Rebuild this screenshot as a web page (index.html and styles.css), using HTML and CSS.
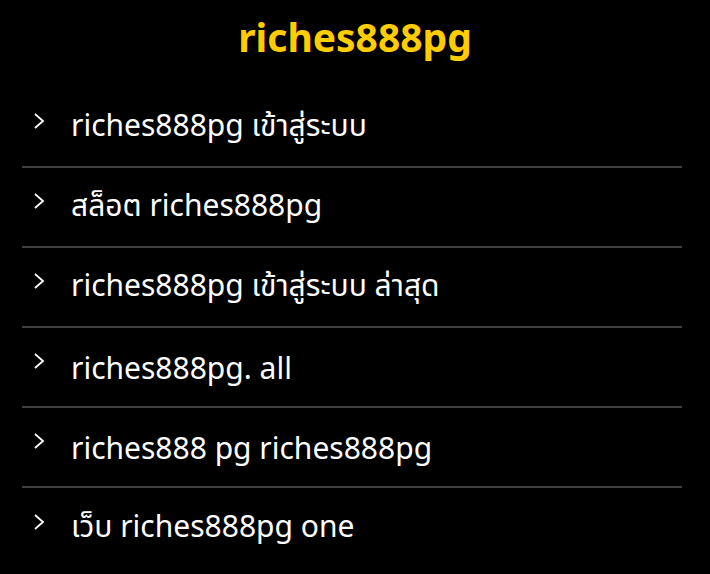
FILE: index.html
```html
<!DOCTYPE html>
<html lang="th">
  <head>
    <meta charset="UTF-8" />
    <meta name="viewport" content="width=device-width, initial-scale=1.0" />
    <title>riches888pg</title>
    <link rel="stylesheet" href="styles.css">
  </head>
  <body>
    <h1 class="title">riches888pg</h1>
    <ul class="links">
      <li>
        <svg class="chev" viewBox="0 0 12 16"><polyline points="2,1 10,8 2,15" /></svg>
        <a href="#">riches888pg เข้าสู่ระบบ</a>
      </li>
      <li>
        <svg class="chev" viewBox="0 0 12 16"><polyline points="2,1 10,8 2,15" /></svg>
        <a href="#">สล็อต riches888pg</a>
      </li>
      <li>
        <svg class="chev" viewBox="0 0 12 16"><polyline points="2,1 10,8 2,15" /></svg>
        <a href="#">riches888pg เข้าสู่ระบบ ล่าสุด</a>
      </li>
      <li>
        <svg class="chev" viewBox="0 0 12 16"><polyline points="2,1 10,8 2,15" /></svg>
        <a href="#">riches888pg. all</a>
      </li>
      <li>
        <svg class="chev" viewBox="0 0 12 16"><polyline points="2,1 10,8 2,15" /></svg>
        <a href="#">riches888 pg riches888pg</a>
      </li>
      <li>
        <svg class="chev" viewBox="0 0 12 16"><polyline points="2,1 10,8 2,15" /></svg>
        <a href="#">เว็บ riches888pg one</a>
      </li>
    </ul>
  </body>
</html>
```
FILE: styles.css
```css
* {
  box-sizing: border-box;
}

body {
  margin: 0;
  background: #000;
  color: #fff;
  font-family: "Noto Sans", "Noto Sans Thai", sans-serif;
}

.title {
  margin: 0;
  height: 88px;
  padding-top: 12px;
  text-align: center;
  color: #ffcc00;
  font-size: 39px;
  font-weight: 700;
  line-height: 50px;
}

.links {
  list-style: none;
  margin: 0 28px 0 22px;
  padding: 0;
}

.links li {
  display: flex;
  align-items: center;
  height: 80px;
  border-bottom: 2px solid #3f3f3f;
  padding-left: 11px;
}

.links li:last-child {
  border-bottom: none;
}

.chev {
  width: 12px;
  height: 16px;
  margin-right: 26px;
  margin-top: -12px;
  flex-shrink: 0;
}

.chev polyline {
  fill: none;
  stroke: #fff;
  stroke-width: 1.8;
}

.links a {
  color: #fff;
  text-decoration: none;
  font-size: 30px;
}
```
